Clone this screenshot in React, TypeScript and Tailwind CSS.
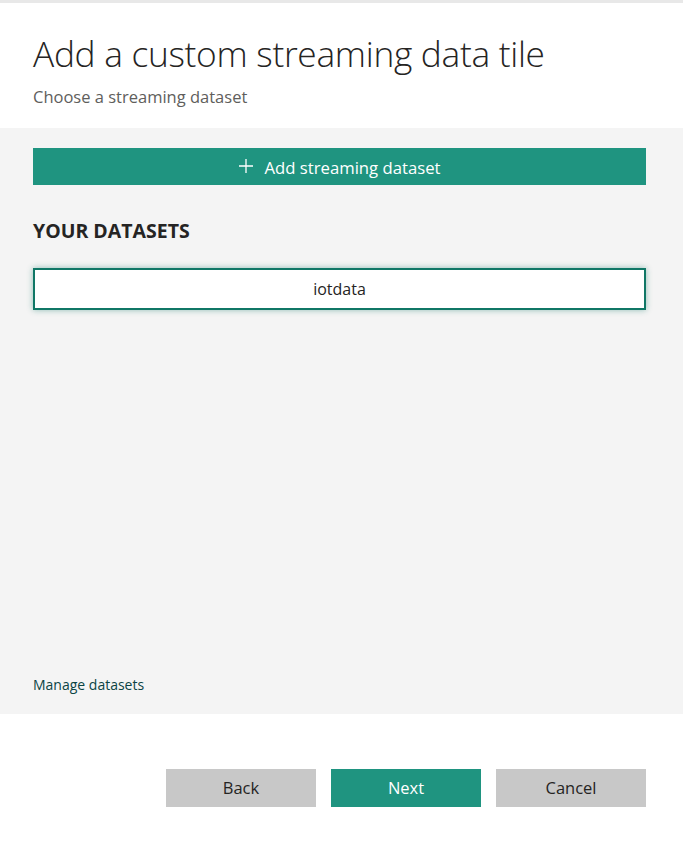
import React from 'react';

const font = { fontFamily: '"Open Sans", "Noto Sans", sans-serif' };

export default function App() {
    return (
        <div className="w-[683px] h-[857px] bg-white flex flex-col" style={font}>
            <div className="h-[3px] bg-[#e8e8e8]" />
            <div className="px-[33px] pt-[27px] h-[125px]">
                <h1 className="text-[35.3px] leading-[46px] font-light text-[#252423] tracking-[-0.3px]">
                    Add a custom streaming data tile
                </h1>
                <p className="mt-[11px] text-[16.5px] leading-[20px] text-[#605e5c]">Choose a streaming dataset</p>
            </div>
            <div className="bg-[#f4f4f4] h-[586px] pl-[33px] pr-[37px] pt-[20px] flex flex-col">
                <button className="h-[37px] w-full bg-[#1f9480] text-white text-[16.7px] flex items-center justify-center gap-[12px]">
                    <svg width="14" height="14" viewBox="0 0 14 14" className="-mt-[1px]">
                        <path d="M7 0v14M0 7h14" stroke="white" strokeWidth="1.3" fill="none" />
                    </svg>
                    <span className="mt-[2px]">Add streaming dataset</span>
                </button>
                <h2 className="mt-[33px] text-[19.5px] leading-[26px] font-bold text-[#252423]">YOUR DATASETS</h2>
                <div className="mt-[24px] h-[42px] bg-white border-2 border-[#107766] shadow-[0_0_6px_rgba(16,119,102,0.45)] flex items-center justify-center text-[16px] text-[#252423]">
                    iotdata
                </div>
                <div className="flex-1" />
                <a className="mb-[19px] text-[14px] leading-[20px] text-[#0b4444]">Manage datasets</a>
            </div>
            <div className="flex justify-end gap-[15px] pr-[37px] pt-[55px]">
                <button className="w-[150px] h-[38px] bg-[#c8c8c8] text-[#252423] text-[16.5px] pt-[1px]">Back</button>
                <button className="w-[150px] h-[38px] bg-[#1f9480] text-white text-[16.5px] pt-[1px]">Next</button>
                <button className="w-[150px] h-[38px] bg-[#c8c8c8] text-[#252423] text-[16.5px] pt-[1px]">Cancel</button>
            </div>
        </div>
    );
}
